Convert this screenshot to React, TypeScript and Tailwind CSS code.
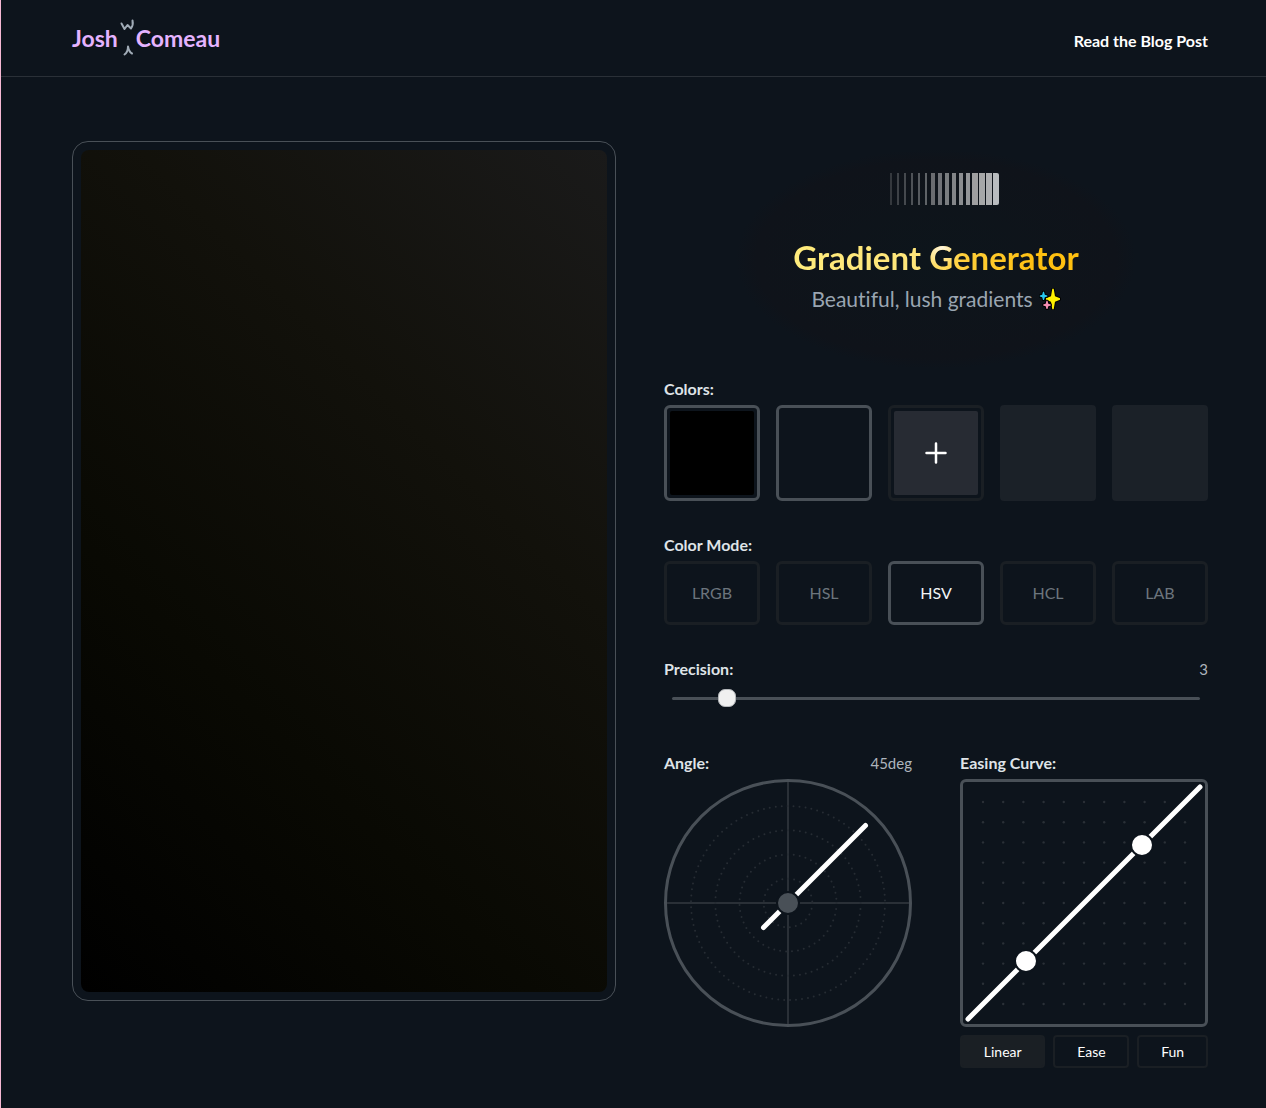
import { useState } from "react";
import type { ReactNode } from "react";

const BARS = [
  { x: 17, w: 2, fill: "#34383d" },
  { x: 24, w: 2, fill: "#3d4146" },
  { x: 31, w: 2, fill: "#45494e" },
  { x: 38, w: 2, fill: "#4e5257" },
  { x: 45, w: 2, fill: "#565a5f" },
  { x: 52, w: 2, fill: "#5f6367" },
  { x: 58, w: 4, fill: "#6a6c70" },
  { x: 65, w: 4, fill: "#717378" },
  { x: 72, w: 4, fill: "#7a7d80" },
  { x: 79, w: 4, fill: "#838588" },
  { x: 86, w: 4, fill: "#8b8d90" },
  { x: 93, w: 4, fill: "#939598" },
  { x: 99, w: 6, fill: "#9f9fa0" },
  { x: 106, w: 6, fill: "#a6a7a8" },
  { x: 113, w: 6, fill: "#aeafb1" },
];

const MODES = ["LRGB", "HSL", "HSV", "HCL", "LAB"];
const STEPS = [0, 1, 2, 3, 4, 5, 6, 7, 8, 9, 10];

function Label({ children, value, htmlFor }: { children: ReactNode; value?: string; htmlFor?: string }) {
  const text = "text-base leading-6 font-bold text-[#dfe3e7]";
  return (
    <div className="flex items-center justify-between">
      {htmlFor ? (
        <label htmlFor={htmlFor} className={text}>
          {children}
        </label>
      ) : (
        <h2 className={text}>{children}</h2>
      )}
      {value && <span className="text-[15px] leading-6 text-[#adb5bd]">{value}</span>}
    </div>
  );
}

function Logo() {
  return (
    <a href="#" aria-label="Josh W Comeau" className="flex items-center text-[23px] leading-8 font-bold text-[#e5b3ff]">
      <span>Josh</span>
      <svg width="18" height="40" viewBox="0 0 18 40" fill="none" stroke="#a0abb6" strokeWidth="2" strokeLinecap="round" strokeLinejoin="round" aria-hidden="true">
        <path d="M3.500 5.500L6.500 11L9.500 7L13 10.500Q15.500 7 14.500 2.500" />
        <path d="M6.500 36.500Q10 34 10 28.500Q11 34 14 35.500" />
      </svg>
      <span>Comeau</span>
    </a>
  );
}

function Sparkles() {
  return (
    <svg width="22" height="22" viewBox="0 0 22 22" role="img" aria-label="sparkles">
      <g stroke="#000" strokeWidth="2" strokeLinejoin="round" style={{ paintOrder: "stroke" }}>
        <path fill="#fff100" d="M13.300 .8H14.700L16 8.200L21 10.300V11.700L16 13.800L14.700 21.200H13.300L12 13.800L7 11.700V10.300L12 8.200Z" />
        <path fill="#28c8f0" d="M4 3.800H5L5.800 6.700L8.300 7.500V8.500L5.800 9.300L5 12H4L3.200 9.300L.8 8.500V7.500L3.200 6.700Z" />
        <path fill="#f78fb3" d="M7.500 12.800H8.500L9.300 15.700L11.800 16.500V17.500L9.300 18.300L8.500 21H7.500L6.700 18.300L4.200 17.500V16.500L6.700 15.700Z" />
      </g>
    </svg>
  );
}

function AngleDial() {
  return (
    <svg viewBox="0 0 248 248" className="block w-full" role="img" aria-label="Angle dial at 45 degrees" fill="none">
      <path d="M124 2V246M2 124H246" stroke="#2a3037" strokeWidth="2" />
      {[24.3, 48.500, 72.700, 97].map((r) => (
        <circle key={r} cx="124" cy="124" r={r} stroke="#262c33" strokeWidth="2" strokeLinecap="round" strokeDasharray="0 6" />
      ))}
      <circle cx="124" cy="124" r="122.500" stroke="#495057" strokeWidth="3" />
      <path d="M99.500 148.500L201.500 46.500" stroke="#fff" strokeWidth="5" strokeLinecap="round" />
      <circle cx="124" cy="124" r="11" fill="#495057" stroke="#0d141c" strokeWidth="2" />
    </svg>
  );
}

function EasingCurve() {
  return (
    <svg viewBox="0 0 248 248" className="block w-full" role="img" aria-label="Linear easing curve" fill="none">
      <rect x="1.500" y="1.500" width="245" height="245" rx="4.500" stroke="#495057" strokeWidth="3" />
      {STEPS.map((r) =>
        STEPS.map((c) => <circle key={`${r}-${c}`} cx={23 + c * 20.2} cy={23 + r * 20.2} r="1.200" fill="#2a3037" />),
      )}
      <path d="M8 240L240 8" stroke="#fff" strokeWidth="5" strokeLinecap="round" />
      <circle cx="66" cy="182" r="11" fill="#fff" stroke="#0d141c" strokeWidth="2" />
      <circle cx="182" cy="66" r="11" fill="#fff" stroke="#0d141c" strokeWidth="2" />
    </svg>
  );
}

export default function App() {
  const [mode, setMode] = useState("HSV");
  const [precision, setPrecision] = useState(3);
  const [curve, setCurve] = useState("Linear");

  return (
    <div className="min-h-screen border-l border-[#f5b8d3] bg-[#0d141c] font-['Lato',sans-serif] text-white [font-variant-ligatures:none]">
      <header className="border-b border-[#2a3037]">
        <div className="flex h-[76px] items-center justify-between pr-[58px] pl-[71px]">
          <Logo />
          <a href="#" className="pt-1.5 text-base leading-6 font-bold text-white">
            Read the Blog Post
          </a>
        </div>
      </header>

      <main className="grid grid-cols-2 items-start gap-12 pt-16 pr-[58px] pb-10 pl-[71px]">
        <div className="h-[860px] rounded-2xl border border-[#495057] p-2">
          <div className="h-full rounded-lg bg-[linear-gradient(45deg,#000000,#090903_33%,#12110b_66%,#1a1a1a)]" />
        </div>

        <div className="flex flex-col">
          <div className="flex flex-col items-center bg-[radial-gradient(ellipse_200px_110px_at_50%_50%,#0d151b,#0f131a_90%,transparent)] pt-8 pb-16">
            <svg width="126" height="32" viewBox="0 0 126 32" aria-hidden="true">
              {BARS.map((b) => (
                <rect key={b.x} x={b.x} y="0" width={b.w} height="32" fill={b.fill} />
              ))}
              <path d="M120 0H124Q126 0 126 2V30Q126 32 124 32H120Z" fill="#b9bcbf" />
            </svg>
            <h1 className="mt-8 bg-[radial-gradient(circle_20px_at_52%_25%,#fff6e0,transparent),linear-gradient(90deg,#ffec7c,#ffe57a_45%,#ffcf3a_60%,#ffc010_85%)] bg-clip-text text-[33px] leading-10 font-bold text-transparent">
              Gradient Generator
            </h1>
            <p className="mt-2 flex items-center gap-1.5 text-[21px] leading-7 text-[#9aa5b1]">
              Beautiful, lush gradients <Sparkles />
            </p>
          </div>

          <section>
            <Label>Colors:</Label>
            <div className="mt-1 grid grid-cols-5 gap-4">
              <button aria-label="Color 1: black" className="aspect-square rounded-md border-3 border-[#495057] p-[3px]">
                <span className="block h-full rounded-xs bg-black" />
              </button>
              <button aria-label="Color 2" className="aspect-square rounded-md border-3 border-[#495057]" />
              <button aria-label="Add color" className="aspect-square rounded-md border-3 border-[#1a1f24] p-[3px]">
                <span className="flex h-full items-center justify-center rounded-xs bg-[#272b33]">
                  <svg width="24" height="24" viewBox="0 0 24 24" stroke="#fff" strokeWidth="2.500" strokeLinecap="round" aria-hidden="true">
                    <path d="M12 2.500V21.500M2.500 12H21.500" />
                  </svg>
                </span>
              </button>
              <div className="aspect-square rounded-sm bg-[#1b2128]" />
              <div className="aspect-square rounded-sm bg-[#1b2128]" />
            </div>
          </section>

          <section className="mt-8">
            <Label>Color Mode:</Label>
            <div className="mt-1 grid grid-cols-5 gap-4">
              {MODES.map((m) => (
                <button
                  key={m}
                  aria-pressed={m === mode}
                  onClick={() => setMode(m)}
                  className={`h-16 rounded-md border-3 text-base ${m === mode ? "border-[#495057] text-[#f1f3f5]" : "border-[#1a1f24] text-[#6c757d]"}`}
                >
                  {m}
                </button>
              ))}
            </div>
          </section>

          <section className="mt-8">
            <Label htmlFor="precision" value={String(precision)}>
              Precision:
            </Label>
            <div className="px-2 pt-[5px] pb-px">
              <input
                id="precision"
                type="range"
                min={1}
                max={23}
                value={precision}
                onChange={(e) => setPrecision(Number(e.target.value))}
                className="block h-6 w-full appearance-none bg-transparent [&::-webkit-slider-runnable-track]:h-[3px] [&::-webkit-slider-runnable-track]:rounded-full [&::-webkit-slider-runnable-track]:bg-[#495057] [&::-webkit-slider-thumb]:-mt-2 [&::-webkit-slider-thumb]:size-[18px] [&::-webkit-slider-thumb]:appearance-none [&::-webkit-slider-thumb]:rounded-[7px] [&::-webkit-slider-thumb]:border [&::-webkit-slider-thumb]:border-[#b5b8bb] [&::-webkit-slider-thumb]:bg-[#f0f0f0]"
              />
            </div>
          </section>

          <div className="mt-10 grid grid-cols-2 gap-12">
            <section>
              <Label value="45deg">Angle:</Label>
              <div className="mt-1">
                <AngleDial />
              </div>
            </section>
            <section>
              <Label>Easing Curve:</Label>
              <div className="mt-1">
                <EasingCurve />
              </div>
              <div className="mt-2 flex gap-2">
                {["Linear", "Ease", "Fun"].map((c) => (
                  <button
                    key={c}
                    aria-pressed={c === curve}
                    onClick={() => setCurve(c)}
                    className={`h-[33px] flex-auto rounded-sm border-2 border-[#1a1f24] px-4 text-sm ${c === curve ? "bg-[#1a1f24]" : ""}`}
                  >
                    {c}
                  </button>
                ))}
              </div>
            </section>
          </div>
        </div>
      </main>
    </div>
  );
}
